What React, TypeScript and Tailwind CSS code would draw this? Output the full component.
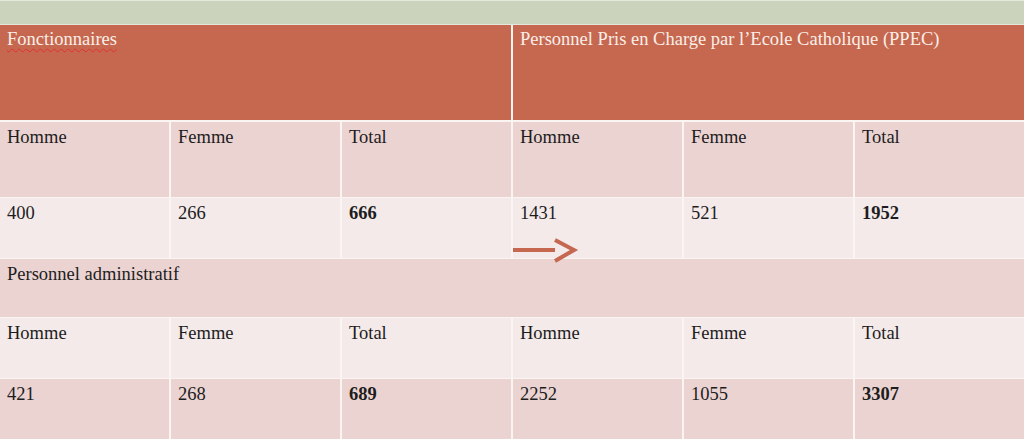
import React from "react"

type Row = { cells: (string | { text: string, bold?: boolean })[], tone: "dark" | "light", h: string }

const font = { fontFamily: '"Liberation Serif", "DejaVu Serif", serif' }

function Cell({ text, bold, tone, h }: { text: string, bold?: boolean, tone: "dark" | "light", h: string }) {
  return (
    <div className={`${tone == "dark" ? "bg-[#ebd3d2]" : "bg-[#f4eaea]"} ${h} px-[7px] pt-[4px] text-[18.5px] leading-[22px] text-[#1d1d1d] ${bold ? "font-bold" : ""}`}>
      {text}
    </div>
  )
}

export default function App() {
  const rows: Row[] = [
    { cells: ["Homme", "Femme", "Total", "Homme", "Femme", "Total"], tone: "dark", h: "h-[75px]" },
    { cells: ["400", "266", { text: "666", bold: true }, "1431", "521", { text: "1952", bold: true }], tone: "light", h: "h-[60px]" },
  ]
  const rows2: Row[] = [
    { cells: ["Homme", "Femme", "Total", "Homme", "Femme", "Total"], tone: "light", h: "h-[60px]" },
    { cells: ["421", "268", { text: "689", bold: true }, "2252", "1055", { text: "3307", bold: true }], tone: "dark", h: "h-[60px]" },
  ]

  const renderRows = (list: Row[]) => list.map((r, i) => (
    <div key={i} className="grid grid-cols-6 gap-x-[2px]">
      {r.cells.map((c, j) => {
        const t = typeof c == "string" ? { text: c } : c
        return <Cell key={j} text={t.text} bold={t.bold} tone={r.tone} h={r.h} />
      })}
    </div>
  ))

  return (
    <div className="relative w-[1024px] h-[439px] overflow-hidden bg-[#faf4f3]" style={font}>
      <div className="h-[25px] bg-[#cbd3bc] border-t border-b border-[#e4e8dc]"></div>
      <div className="flex flex-col gap-y-[1px]">
        <div className="grid grid-cols-2 gap-x-[2px] mb-[1px]">
          <div className="h-[95px] bg-[#c5684f] px-[7px] pt-[3px] text-[18.5px] leading-[22px] text-[#fbeee9]">
            <span className="underline decoration-wavy decoration-[#e03030] decoration-1 underline-offset-[3px]">Fonctionnaires</span>
          </div>
          <div className="h-[95px] bg-[#c5684f] px-[7px] pt-[3px] text-[18.5px] leading-[22px] text-[#fbeee9]">
            Personnel Pris en Charge par l’Ecole Catholique (PPEC)
          </div>
        </div>
        {renderRows(rows)}
        <div className="h-[58px] bg-[#ebd3d2] px-[7px] pt-[4px] text-[18.5px] leading-[22px] text-[#1d1d1d]">
          Personnel administratif
        </div>
        {renderRows(rows2)}
      </div>

      <svg className="absolute left-[513px] top-[238px]" width="66" height="26" viewBox="0 0 66 26">
        <line x1="0" y1="12" x2="42" y2="12" stroke="#c5684f" strokeWidth="4" />
        <polyline points="42,2 61,12 42,23" fill="none" stroke="#c5684f" strokeWidth="4" />
      </svg>
    </div>
  )
}
